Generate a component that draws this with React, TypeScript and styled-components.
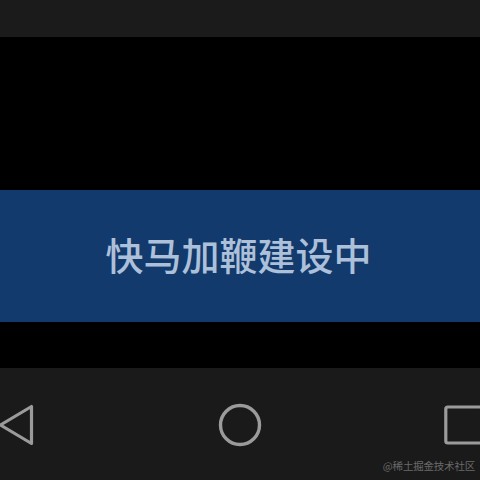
import React from "react";
import styled, { createGlobalStyle } from "styled-components";

const GlobalStyle = createGlobalStyle`
  html, body {
    margin: 0;
    padding: 0;
    background: #000;
  }
  body {
    font-family: "Noto Sans CJK SC", "Noto Sans", sans-serif;
  }
`;

const Screen = styled.div`
  width: 480px;
  height: 480px;
  display: flex;
  flex-direction: column;
  background: #000;
  overflow: hidden;
`;

const StatusBar = styled.div`
  height: 37px;
  flex-shrink: 0;
  background: #1b1b1b;
`;

const Gap = styled.div<{ $h: number }>`
  height: ${(p) => p.$h}px;
  flex-shrink: 0;
  background: #000;
`;

const Banner = styled.div`
  height: 132px;
  flex-shrink: 0;
  background: #133a6c;
  display: flex;
  align-items: center;
  justify-content: center;
`;

const BannerText = styled.div`
  color: #adc0da;
  font-size: 38px;
  font-weight: 500;
  line-height: 1;
  padding-right: 3px;
  padding-bottom: 4px;
`;

const NavBar = styled.div`
  flex: 1;
  background: #1a1a1a;
  position: relative;
  display: flex;
  align-items: center;
  justify-content: space-between;
  padding-top: 2px;
  overflow: hidden;
`;

const NavIcon = styled.svg<{ $shift?: number }>`
  display: block;
  margin-right: ${(p) => p.$shift ?? 0}px;
`;

const Watermark = styled.div`
  position: absolute;
  right: 5px;
  bottom: 7px;
  font-size: 10.5px;
  color: #6a6a6a;
  font-family: "Noto Sans CJK SC", sans-serif;
  letter-spacing: -0.2px;
`;

export default function App() {
  return (
    <Screen>
      <GlobalStyle />
      <StatusBar />
      <Gap $h={153} />
      <Banner>
        <BannerText>快马加鞭建设中</BannerText>
      </Banner>
      <Gap $h={46} />
      <NavBar>
        <NavIcon width="36" height="46" viewBox="0 0 36 46">
          <path
            d="M31.5 4.5 L31.5 41.5 L0.5 23 Z"
            fill="none"
            stroke="#9b9b9b"
            strokeWidth="3.2"
            strokeLinejoin="round"
          />
        </NavIcon>
        <NavIcon width="46" height="46" viewBox="0 0 46 46">
          <circle cx="23" cy="23" r="19.5" fill="none" stroke="#9b9b9b" strokeWidth="3.4" />
        </NavIcon>
        <NavIcon width="40" height="46" viewBox="0 0 40 46" $shift={-4}>
          <rect
            x="1.8"
            y="5"
            width="36"
            height="36"
            rx="2"
            fill="none"
            stroke="#9b9b9b"
            strokeWidth="3.2"
          />
        </NavIcon>
        <Watermark>@稀土掘金技术社区</Watermark>
      </NavBar>
    </Screen>
  );
}
